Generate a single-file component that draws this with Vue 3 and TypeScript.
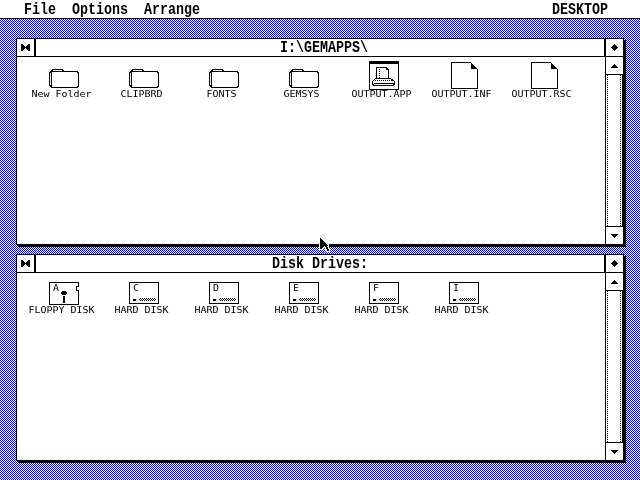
<script setup lang="ts">
interface Item {
  name: string
  kind: 'folder' | 'app' | 'doc'
}
interface Drive {
  letter: string
  name: string
  floppy?: boolean
}

const menus = ['File', 'Options', 'Arrange']

const items: Item[] = [
  { name: 'New Folder', kind: 'folder' },
  { name: 'CLIPBRD', kind: 'folder' },
  { name: 'FONTS', kind: 'folder' },
  { name: 'GEMSYS', kind: 'folder' },
  { name: 'OUTPUT.APP', kind: 'app' },
  { name: 'OUTPUT.INF', kind: 'doc' },
  { name: 'OUTPUT.RSC', kind: 'doc' },
]

const drives: Drive[] = [
  { letter: 'A', name: 'FLOPPY DISK', floppy: true },
  { letter: 'C', name: 'HARD DISK' },
  { letter: 'D', name: 'HARD DISK' },
  { letter: 'E', name: 'HARD DISK' },
  { letter: 'F', name: 'HARD DISK' },
  { letter: 'I', name: 'HARD DISK' },
]

const windows = [
  { title: ' I:\\GEMAPPS\\', list: 'files' },
  { title: 'Disk Drives:', list: 'drives' },
]
</script>

<template>
  <div class="screen">
    <div class="menubar">
      <div class="menus">
        <span v-for="m in menus" :key="m" class="bigtext">{{ m }}</span>
      </div>
      <span class="bigtext">DESKTOP</span>
    </div>
    <div class="desktop">
      <div v-for="w in windows" :key="w.title" class="window">
        <div class="titlebar">
          <div class="closer">
            <svg width="9" height="7" viewBox="0 0 9 7" shape-rendering="crispEdges">
              <path d="M0 0h2v1h1v1h1v1h1V2h1V1h1V0h2v7H7V6H6V5H5V4H4v1H3v1H2v1H0z" fill="#000" />
            </svg>
          </div>
          <div class="title bigtext">{{ w.title }}</div>
          <div class="fuller">
            <svg width="7" height="7" viewBox="0 0 7 7" shape-rendering="crispEdges">
              <path d="M3 0h1v1h1v1h1v1h1v1H6v1H5v1H4v1H3V6H2V5H1V4H0V3h1V2h1V1h1z" fill="#000" />
            </svg>
          </div>
        </div>
        <div class="body">
          <div class="content">
            <template v-if="w.list === 'files'">
              <div v-for="it in items" :key="it.name" class="icon">
                <svg width="32" height="30" viewBox="0 0 32 30" shape-rendering="crispEdges" fill="none" stroke="#000">
                  <template v-if="it.kind === 'folder'">
                    <path d="M3.5 27.5V10.5H4.5V9.5H14.5V10.5H15.5V11.5H29.5V12.5H30.5V26.5H29.5V27.5H3.5" />
                    <path d="M15.5 11.5H2.5V12.5H1.5V25.5H2.5V26.5H3.5" />
                  </template>
                  <template v-else-if="it.kind === 'doc'">
                    <path d="M3.5 2.5H22.5L29.5 9.5V28.5H3.5Z" />
                    <path d="M23 3h1v1h1v1h1v1h1v1h1v1h1v1h-6z" fill="#000" stroke="none" />
                  </template>
                  <template v-else>
                    <rect x="1.5" y="1.5" width="29" height="28" />
                    <rect x="1" y="1" width="30" height="3" fill="#000" stroke="none" />
                    <path d="M8.5 7.5H18.5L20.5 9.5V18.5H8.5Z" />
                    <path d="M18.5 7.5V9.5H20.5" />
                    <path d="M11 9v9" stroke-dasharray="1 1" />
                    <path d="M7.5 18.5H22.5L26.5 21.5V24.5H25.5V25.5H5.5V24.5H4.5V21.5Z" />
                    <path d="M7 20.5H25" stroke-dasharray="1 1" />
                    <path d="M6 23.5H26" />
                  </template>
                </svg>
                <span class="label">{{ it.name }}</span>
              </div>
            </template>
            <template v-else>
              <div v-for="d in drives" :key="d.letter" class="icon">
                <svg width="32" height="30" viewBox="0 0 32 30" shape-rendering="crispEdges" fill="none" stroke="#000">
                  <template v-if="d.floppy">
                    <path d="M1.5 6.5H30.5V10.5H28.5V14.5H30.5V28.5H1.5Z" />
                    <path d="M14 15h4v1h1v2h-1v1h-4v-1h-1v-2h1zM15 20h2v7h-2z" fill="#000" stroke="none" />
                  </template>
                  <template v-else>
                    <rect x="1.5" y="6.5" width="29" height="21" />
                    <path d="M5 23h3v2H5z" fill="#000" stroke="none" />
                    <rect x="11" y="22" width="17" height="3" stroke="none" fill="url(#dots)" />
                  </template>
                  <defs>
                    <pattern id="dots" width="2" height="2" patternUnits="userSpaceOnUse">
                      <rect width="1" height="1" fill="#000" stroke="none" />
                      <rect x="1" y="1" width="1" height="1" fill="#000" stroke="none" />
                    </pattern>
                  </defs>
                </svg>
                <span class="label drive-letter">{{ d.letter }}</span>
                <span class="label">{{ d.name }}</span>
              </div>
            </template>
          </div>
          <div class="scroller">
            <div class="arrow">
              <svg width="7" height="4" viewBox="0 0 7 4" shape-rendering="crispEdges">
                <path d="M3 0h1v1h1v1h1v1h1v1H0V3h1V2h1V1h1z" fill="#000" />
              </svg>
            </div>
            <div class="track"></div>
            <div class="arrow down">
              <svg width="7" height="4" viewBox="0 0 7 4" shape-rendering="crispEdges">
                <path d="M0 0h7v1H6v1H5v1H4v1H3V3H2V2H1V1H0z" fill="#000" />
              </svg>
            </div>
          </div>
        </div>
      </div>
    </div>
    <svg class="cursor" width="12" height="18" viewBox="-1 -1 12 18" shape-rendering="crispEdges">
      <path d="M0 0h1v1h1v1h1v1h1v1h1v1h1v1h1v1h1v1H7v1h1v2h1v2H7v-2H6v-2H5v-1H4v1H3v1H2v1H0z" fill="#000" stroke="#fff" stroke-width="2" paint-order="stroke" />
    </svg>
  </div>
</template>

<style>
html,
body {
  margin: 0;
  background: #fff;
}
</style>

<style scoped>
.screen {
  position: relative;
  width: 640px;
  height: 480px;
  overflow: hidden;
  display: flex;
  flex-direction: column;
  background: #fff;
}

.bigtext {
  display: inline-block;
  font-family: "Liberation Mono", monospace;
  font-size: 13.33px;
  line-height: 13px;
  font-weight: 700;
  white-space: pre;
  color: #000;
  transform: scaleY(1.3);
  filter: grayscale(1) contrast(5);
}

.menubar {
  box-sizing: border-box;
  height: 19px;
  flex: none;
  display: flex;
  justify-content: space-between;
  padding: 3px 32px 0 24px;
  border-bottom: 1px solid #000;
}

.menus {
  display: flex;
  gap: 16px;
}

.desktop {
  flex: 1;
  display: flex;
  flex-direction: column;
  gap: 9px;
  padding: 19px 0 0 16px;
  background: repeating-conic-gradient(#0000ff 0 25%, #ffffff 0 50%) 0 0 / 2px 2px;
}

.window {
  box-sizing: border-box;
  width: 608px;
  height: 207px;
  border: 1px solid #000;
  box-shadow: 2px 2px 0 #000;
  background: #fff;
  display: flex;
  flex-direction: column;
}

.titlebar {
  flex: none;
  height: 18px;
  display: flex;
  box-sizing: border-box;
  border-bottom: 1px solid #000;
}

.closer,
.fuller {
  box-sizing: border-box;
  flex: none;
  display: flex;
  align-items: center;
  justify-content: center;
}

.closer {
  width: 19px;
  border-right: 2px solid #000;
}

.fuller {
  width: 19px;
  border-left: 2px solid #000;
}

.title {
  flex: 1;
  text-align: center;
  margin-top: 2px;
}

.body {
  flex: 1;
  display: flex;
  min-height: 0;
}

.content {
  flex: 1;
  display: flex;
  align-items: flex-start;
  padding: 3px 0 0 7px;
}

.icon {
  position: relative;
  width: 80px;
  display: flex;
  flex-direction: column;
  align-items: center;
  gap: 2px;
}

.label {
  margin-right: 5px;
  font-family: "DejaVu Sans Mono", monospace;
  font-size: 10px;
  line-height: 6px;
  white-space: pre;
  color: #000;
  transform: scaleY(0.8);
  filter: grayscale(1) contrast(3);
}

.drive-letter {
  position: absolute;
  left: 29px;
  top: 10px;
  margin: 0;
}

.scroller {
  box-sizing: border-box;
  flex: none;
  width: 18px;
  border-left: 1px solid #000;
  display: flex;
  flex-direction: column;
}

.arrow {
  box-sizing: border-box;
  flex: none;
  height: 18px;
  display: flex;
  align-items: center;
  justify-content: center;
  border-bottom: 1px solid #000;
}

.arrow.down {
  border-bottom: 0;
  border-top: 1px solid #000;
}

.track {
  flex: 1;
  background-image:
    repeating-linear-gradient(#000 0 1px, transparent 1px 2px),
    repeating-linear-gradient(#000 0 1px, transparent 1px 2px),
    linear-gradient(#000, #000);
  background-size: 1px 100%, 1px 100%, 1px 100%;
  background-repeat: no-repeat;
  background-position: 1px 0, 14px 0, 16px 0;
}

.cursor {
  position: absolute;
  left: 319px;
  top: 237px;
}
</style>
